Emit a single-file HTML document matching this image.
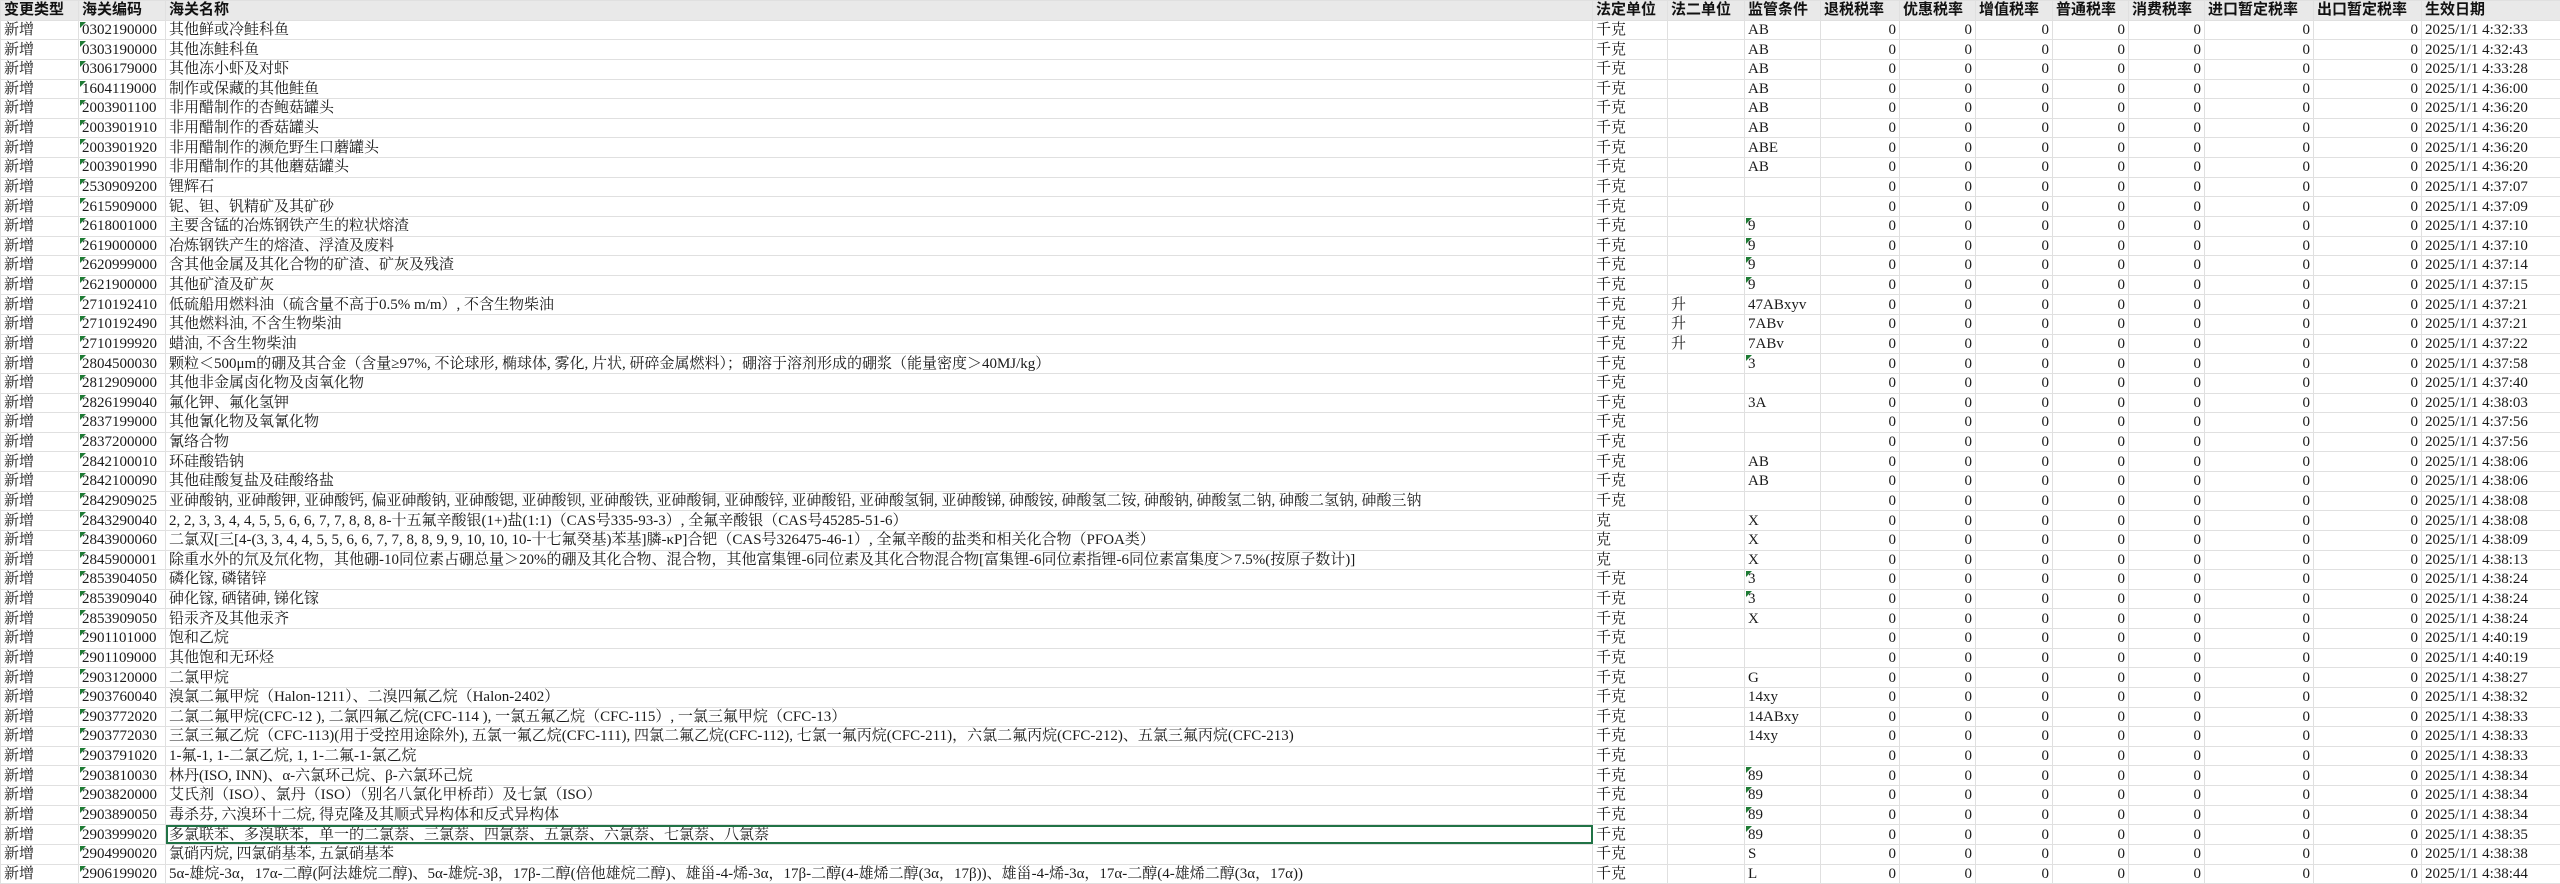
<!DOCTYPE html>
<html><head><meta charset="utf-8">
<style>
html,body{margin:0;padding:0;background:#fff;width:2560px;height:884px;overflow:hidden}
table{border-collapse:collapse;table-layout:fixed;width:2560px;font-family:"Liberation Serif","Noto Serif CJK SC",serif;font-size:15px;color:#1a1a1a}
td,th{height:19.64px;padding:0 3px;border:1px solid #e0e0e0;white-space:pre;overflow:hidden;line-height:18px;box-sizing:border-box}
th{background:#e9e9e9;font-weight:bold;text-align:left;font-family:"Liberation Serif","Noto Sans CJK SC",sans-serif;color:#111}
td.n{text-align:right}
td.c{position:relative}
td.c::before{content:"";position:absolute;left:1px;top:1px;border-top:6px solid #1e7b34;border-right:6px solid transparent}
td.m{position:relative}
td.m::before{content:"";position:absolute;left:1px;top:1px;border-top:6px solid #1e7b34;border-right:6px solid transparent}
td.sel{outline:2px solid #217346;outline-offset:-2px}
</style></head><body>
<table>
<colgroup><col style="width:78px"><col style="width:87px"><col style="width:1427px"><col style="width:75px"><col style="width:77px"><col style="width:76px"><col style="width:79px"><col style="width:76px"><col style="width:77px"><col style="width:76px"><col style="width:76px"><col style="width:109px"><col style="width:108px"><col style="width:139px"></colgroup>
<tr><th>变更类型</th><th>海关编码</th><th>海关名称</th><th>法定单位</th><th>法二单位</th><th>监管条件</th><th>退税税率</th><th>优惠税率</th><th>增值税率</th><th>普通税率</th><th>消费税率</th><th>进口暂定税率</th><th>出口暂定税率</th><th>生效日期</th></tr>
<tr><td>新增</td><td class="c">0302190000</td><td>其他鲜或冷鲑科鱼</td><td>千克</td><td></td><td>AB</td><td class="n">0</td><td class="n">0</td><td class="n">0</td><td class="n">0</td><td class="n">0</td><td class="n">0</td><td class="n">0</td><td>2025/1/1 4:32:33</td></tr>
<tr><td>新增</td><td class="c">0303190000</td><td>其他冻鲑科鱼</td><td>千克</td><td></td><td>AB</td><td class="n">0</td><td class="n">0</td><td class="n">0</td><td class="n">0</td><td class="n">0</td><td class="n">0</td><td class="n">0</td><td>2025/1/1 4:32:43</td></tr>
<tr><td>新增</td><td class="c">0306179000</td><td>其他冻小虾及对虾</td><td>千克</td><td></td><td>AB</td><td class="n">0</td><td class="n">0</td><td class="n">0</td><td class="n">0</td><td class="n">0</td><td class="n">0</td><td class="n">0</td><td>2025/1/1 4:33:28</td></tr>
<tr><td>新增</td><td class="c">1604119000</td><td>制作或保藏的其他鲑鱼</td><td>千克</td><td></td><td>AB</td><td class="n">0</td><td class="n">0</td><td class="n">0</td><td class="n">0</td><td class="n">0</td><td class="n">0</td><td class="n">0</td><td>2025/1/1 4:36:00</td></tr>
<tr><td>新增</td><td class="c">2003901100</td><td>非用醋制作的杏鲍菇罐头</td><td>千克</td><td></td><td>AB</td><td class="n">0</td><td class="n">0</td><td class="n">0</td><td class="n">0</td><td class="n">0</td><td class="n">0</td><td class="n">0</td><td>2025/1/1 4:36:20</td></tr>
<tr><td>新增</td><td class="c">2003901910</td><td>非用醋制作的香菇罐头</td><td>千克</td><td></td><td>AB</td><td class="n">0</td><td class="n">0</td><td class="n">0</td><td class="n">0</td><td class="n">0</td><td class="n">0</td><td class="n">0</td><td>2025/1/1 4:36:20</td></tr>
<tr><td>新增</td><td class="c">2003901920</td><td>非用醋制作的濒危野生口蘑罐头</td><td>千克</td><td></td><td>ABE</td><td class="n">0</td><td class="n">0</td><td class="n">0</td><td class="n">0</td><td class="n">0</td><td class="n">0</td><td class="n">0</td><td>2025/1/1 4:36:20</td></tr>
<tr><td>新增</td><td class="c">2003901990</td><td>非用醋制作的其他蘑菇罐头</td><td>千克</td><td></td><td>AB</td><td class="n">0</td><td class="n">0</td><td class="n">0</td><td class="n">0</td><td class="n">0</td><td class="n">0</td><td class="n">0</td><td>2025/1/1 4:36:20</td></tr>
<tr><td>新增</td><td class="c">2530909200</td><td>锂辉石</td><td>千克</td><td></td><td></td><td class="n">0</td><td class="n">0</td><td class="n">0</td><td class="n">0</td><td class="n">0</td><td class="n">0</td><td class="n">0</td><td>2025/1/1 4:37:07</td></tr>
<tr><td>新增</td><td class="c">2615909000</td><td>铌、钽、钒精矿及其矿砂</td><td>千克</td><td></td><td></td><td class="n">0</td><td class="n">0</td><td class="n">0</td><td class="n">0</td><td class="n">0</td><td class="n">0</td><td class="n">0</td><td>2025/1/1 4:37:09</td></tr>
<tr><td>新增</td><td class="c">2618001000</td><td>主要含锰的冶炼钢铁产生的粒状熔渣</td><td>千克</td><td></td><td class="m">9</td><td class="n">0</td><td class="n">0</td><td class="n">0</td><td class="n">0</td><td class="n">0</td><td class="n">0</td><td class="n">0</td><td>2025/1/1 4:37:10</td></tr>
<tr><td>新增</td><td class="c">2619000000</td><td>冶炼钢铁产生的熔渣、浮渣及废料</td><td>千克</td><td></td><td class="m">9</td><td class="n">0</td><td class="n">0</td><td class="n">0</td><td class="n">0</td><td class="n">0</td><td class="n">0</td><td class="n">0</td><td>2025/1/1 4:37:10</td></tr>
<tr><td>新增</td><td class="c">2620999000</td><td>含其他金属及其化合物的矿渣、矿灰及残渣</td><td>千克</td><td></td><td class="m">9</td><td class="n">0</td><td class="n">0</td><td class="n">0</td><td class="n">0</td><td class="n">0</td><td class="n">0</td><td class="n">0</td><td>2025/1/1 4:37:14</td></tr>
<tr><td>新增</td><td class="c">2621900000</td><td>其他矿渣及矿灰</td><td>千克</td><td></td><td class="m">9</td><td class="n">0</td><td class="n">0</td><td class="n">0</td><td class="n">0</td><td class="n">0</td><td class="n">0</td><td class="n">0</td><td>2025/1/1 4:37:15</td></tr>
<tr><td>新增</td><td class="c">2710192410</td><td>低硫船用燃料油（硫含量不高于0.5% m/m）, 不含生物柴油</td><td>千克</td><td>升</td><td>47ABxyv</td><td class="n">0</td><td class="n">0</td><td class="n">0</td><td class="n">0</td><td class="n">0</td><td class="n">0</td><td class="n">0</td><td>2025/1/1 4:37:21</td></tr>
<tr><td>新增</td><td class="c">2710192490</td><td>其他燃料油, 不含生物柴油</td><td>千克</td><td>升</td><td>7ABv</td><td class="n">0</td><td class="n">0</td><td class="n">0</td><td class="n">0</td><td class="n">0</td><td class="n">0</td><td class="n">0</td><td>2025/1/1 4:37:21</td></tr>
<tr><td>新增</td><td class="c">2710199920</td><td>蜡油, 不含生物柴油</td><td>千克</td><td>升</td><td>7ABv</td><td class="n">0</td><td class="n">0</td><td class="n">0</td><td class="n">0</td><td class="n">0</td><td class="n">0</td><td class="n">0</td><td>2025/1/1 4:37:22</td></tr>
<tr><td>新增</td><td class="c">2804500030</td><td>颗粒＜500μm的硼及其合金（含量≥97%, 不论球形, 椭球体, 雾化, 片状, 研碎金属燃料）；硼溶于溶剂形成的硼浆（能量密度＞40MJ/kg）</td><td>千克</td><td></td><td class="m">3</td><td class="n">0</td><td class="n">0</td><td class="n">0</td><td class="n">0</td><td class="n">0</td><td class="n">0</td><td class="n">0</td><td>2025/1/1 4:37:58</td></tr>
<tr><td>新增</td><td class="c">2812909000</td><td>其他非金属卤化物及卤氧化物</td><td>千克</td><td></td><td></td><td class="n">0</td><td class="n">0</td><td class="n">0</td><td class="n">0</td><td class="n">0</td><td class="n">0</td><td class="n">0</td><td>2025/1/1 4:37:40</td></tr>
<tr><td>新增</td><td class="c">2826199040</td><td>氟化钾、氟化氢钾</td><td>千克</td><td></td><td>3A</td><td class="n">0</td><td class="n">0</td><td class="n">0</td><td class="n">0</td><td class="n">0</td><td class="n">0</td><td class="n">0</td><td>2025/1/1 4:38:03</td></tr>
<tr><td>新增</td><td class="c">2837199000</td><td>其他氰化物及氧氰化物</td><td>千克</td><td></td><td></td><td class="n">0</td><td class="n">0</td><td class="n">0</td><td class="n">0</td><td class="n">0</td><td class="n">0</td><td class="n">0</td><td>2025/1/1 4:37:56</td></tr>
<tr><td>新增</td><td class="c">2837200000</td><td>氰络合物</td><td>千克</td><td></td><td></td><td class="n">0</td><td class="n">0</td><td class="n">0</td><td class="n">0</td><td class="n">0</td><td class="n">0</td><td class="n">0</td><td>2025/1/1 4:37:56</td></tr>
<tr><td>新增</td><td class="c">2842100010</td><td>环硅酸锆钠</td><td>千克</td><td></td><td>AB</td><td class="n">0</td><td class="n">0</td><td class="n">0</td><td class="n">0</td><td class="n">0</td><td class="n">0</td><td class="n">0</td><td>2025/1/1 4:38:06</td></tr>
<tr><td>新增</td><td class="c">2842100090</td><td>其他硅酸复盐及硅酸络盐</td><td>千克</td><td></td><td>AB</td><td class="n">0</td><td class="n">0</td><td class="n">0</td><td class="n">0</td><td class="n">0</td><td class="n">0</td><td class="n">0</td><td>2025/1/1 4:38:06</td></tr>
<tr><td>新增</td><td class="c">2842909025</td><td>亚砷酸钠, 亚砷酸钾, 亚砷酸钙, 偏亚砷酸钠, 亚砷酸锶, 亚砷酸钡, 亚砷酸铁, 亚砷酸铜, 亚砷酸锌, 亚砷酸铅, 亚砷酸氢铜, 亚砷酸锑, 砷酸铵, 砷酸氢二铵, 砷酸钠, 砷酸氢二钠, 砷酸二氢钠, 砷酸三钠</td><td>千克</td><td></td><td></td><td class="n">0</td><td class="n">0</td><td class="n">0</td><td class="n">0</td><td class="n">0</td><td class="n">0</td><td class="n">0</td><td>2025/1/1 4:38:08</td></tr>
<tr><td>新增</td><td class="c">2843290040</td><td>2, 2, 3, 3, 4, 4, 5, 5, 6, 6, 7, 7, 8, 8, 8-十五氟辛酸银(1+)盐(1:1)（CAS号335-93-3）, 全氟辛酸银（CAS号45285-51-6）</td><td>克</td><td></td><td>X</td><td class="n">0</td><td class="n">0</td><td class="n">0</td><td class="n">0</td><td class="n">0</td><td class="n">0</td><td class="n">0</td><td>2025/1/1 4:38:08</td></tr>
<tr><td>新增</td><td class="c">2843900060</td><td>二氯双[三[4-(3, 3, 4, 4, 5, 5, 6, 6, 7, 7, 8, 8, 9, 9, 10, 10, 10-十七氟癸基)苯基]膦-κP]合钯（CAS号326475-46-1）, 全氟辛酸的盐类和相关化合物（PFOA类）</td><td>克</td><td></td><td>X</td><td class="n">0</td><td class="n">0</td><td class="n">0</td><td class="n">0</td><td class="n">0</td><td class="n">0</td><td class="n">0</td><td>2025/1/1 4:38:09</td></tr>
<tr><td>新增</td><td class="c">2845900001</td><td>除重水外的氘及氘化物，其他硼-10同位素占硼总量＞20%的硼及其化合物、混合物，其他富集锂-6同位素及其化合物混合物[富集锂-6同位素指锂-6同位素富集度＞7.5%(按原子数计)]</td><td>克</td><td></td><td>X</td><td class="n">0</td><td class="n">0</td><td class="n">0</td><td class="n">0</td><td class="n">0</td><td class="n">0</td><td class="n">0</td><td>2025/1/1 4:38:13</td></tr>
<tr><td>新增</td><td class="c">2853904050</td><td>磷化镓, 磷锗锌</td><td>千克</td><td></td><td class="m">3</td><td class="n">0</td><td class="n">0</td><td class="n">0</td><td class="n">0</td><td class="n">0</td><td class="n">0</td><td class="n">0</td><td>2025/1/1 4:38:24</td></tr>
<tr><td>新增</td><td class="c">2853909040</td><td>砷化镓, 硒锗砷, 锑化镓</td><td>千克</td><td></td><td class="m">3</td><td class="n">0</td><td class="n">0</td><td class="n">0</td><td class="n">0</td><td class="n">0</td><td class="n">0</td><td class="n">0</td><td>2025/1/1 4:38:24</td></tr>
<tr><td>新增</td><td class="c">2853909050</td><td>铅汞齐及其他汞齐</td><td>千克</td><td></td><td>X</td><td class="n">0</td><td class="n">0</td><td class="n">0</td><td class="n">0</td><td class="n">0</td><td class="n">0</td><td class="n">0</td><td>2025/1/1 4:38:24</td></tr>
<tr><td>新增</td><td class="c">2901101000</td><td>饱和乙烷</td><td>千克</td><td></td><td></td><td class="n">0</td><td class="n">0</td><td class="n">0</td><td class="n">0</td><td class="n">0</td><td class="n">0</td><td class="n">0</td><td>2025/1/1 4:40:19</td></tr>
<tr><td>新增</td><td class="c">2901109000</td><td>其他饱和无环烃</td><td>千克</td><td></td><td></td><td class="n">0</td><td class="n">0</td><td class="n">0</td><td class="n">0</td><td class="n">0</td><td class="n">0</td><td class="n">0</td><td>2025/1/1 4:40:19</td></tr>
<tr><td>新增</td><td class="c">2903120000</td><td>二氯甲烷</td><td>千克</td><td></td><td>G</td><td class="n">0</td><td class="n">0</td><td class="n">0</td><td class="n">0</td><td class="n">0</td><td class="n">0</td><td class="n">0</td><td>2025/1/1 4:38:27</td></tr>
<tr><td>新增</td><td class="c">2903760040</td><td>溴氯二氟甲烷（Halon-1211）、二溴四氟乙烷（Halon-2402）</td><td>千克</td><td></td><td>14xy</td><td class="n">0</td><td class="n">0</td><td class="n">0</td><td class="n">0</td><td class="n">0</td><td class="n">0</td><td class="n">0</td><td>2025/1/1 4:38:32</td></tr>
<tr><td>新增</td><td class="c">2903772020</td><td>二氯二氟甲烷(CFC-12 ), 二氯四氟乙烷(CFC-114 ), 一氯五氟乙烷（CFC-115）, 一氯三氟甲烷（CFC-13）</td><td>千克</td><td></td><td>14ABxy</td><td class="n">0</td><td class="n">0</td><td class="n">0</td><td class="n">0</td><td class="n">0</td><td class="n">0</td><td class="n">0</td><td>2025/1/1 4:38:33</td></tr>
<tr><td>新增</td><td class="c">2903772030</td><td>三氯三氟乙烷（CFC-113)(用于受控用途除外), 五氯一氟乙烷(CFC-111), 四氯二氟乙烷(CFC-112), 七氯一氟丙烷(CFC-211)，六氯二氟丙烷(CFC-212)、五氯三氟丙烷(CFC-213)</td><td>千克</td><td></td><td>14xy</td><td class="n">0</td><td class="n">0</td><td class="n">0</td><td class="n">0</td><td class="n">0</td><td class="n">0</td><td class="n">0</td><td>2025/1/1 4:38:33</td></tr>
<tr><td>新增</td><td class="c">2903791020</td><td>1-氟-1, 1-二氯乙烷, 1, 1-二氟-1-氯乙烷</td><td>千克</td><td></td><td></td><td class="n">0</td><td class="n">0</td><td class="n">0</td><td class="n">0</td><td class="n">0</td><td class="n">0</td><td class="n">0</td><td>2025/1/1 4:38:33</td></tr>
<tr><td>新增</td><td class="c">2903810030</td><td>林丹(ISO, INN)、α-六氯环己烷、β-六氯环己烷</td><td>千克</td><td></td><td class="m">89</td><td class="n">0</td><td class="n">0</td><td class="n">0</td><td class="n">0</td><td class="n">0</td><td class="n">0</td><td class="n">0</td><td>2025/1/1 4:38:34</td></tr>
<tr><td>新增</td><td class="c">2903820000</td><td>艾氏剂（ISO）、氯丹（ISO）（别名八氯化甲桥茚）及七氯（ISO）</td><td>千克</td><td></td><td class="m">89</td><td class="n">0</td><td class="n">0</td><td class="n">0</td><td class="n">0</td><td class="n">0</td><td class="n">0</td><td class="n">0</td><td>2025/1/1 4:38:34</td></tr>
<tr><td>新增</td><td class="c">2903890050</td><td>毒杀芬, 六溴环十二烷, 得克隆及其顺式异构体和反式异构体</td><td>千克</td><td></td><td class="m">89</td><td class="n">0</td><td class="n">0</td><td class="n">0</td><td class="n">0</td><td class="n">0</td><td class="n">0</td><td class="n">0</td><td>2025/1/1 4:38:34</td></tr>
<tr><td>新增</td><td class="c">2903999020</td><td class="sel">多氯联苯、多溴联苯，单一的二氯萘、三氯萘、四氯萘、五氯萘、六氯萘、七氯萘、八氯萘</td><td>千克</td><td></td><td class="m">89</td><td class="n">0</td><td class="n">0</td><td class="n">0</td><td class="n">0</td><td class="n">0</td><td class="n">0</td><td class="n">0</td><td>2025/1/1 4:38:35</td></tr>
<tr><td>新增</td><td class="c">2904990020</td><td>氯硝丙烷, 四氯硝基苯, 五氯硝基苯</td><td>千克</td><td></td><td>S</td><td class="n">0</td><td class="n">0</td><td class="n">0</td><td class="n">0</td><td class="n">0</td><td class="n">0</td><td class="n">0</td><td>2025/1/1 4:38:38</td></tr>
<tr><td>新增</td><td class="c">2906199020</td><td>5α-雄烷-3α，17α-二醇(阿法雄烷二醇)、5α-雄烷-3β，17β-二醇(倍他雄烷二醇)、雄甾-4-烯-3α，17β-二醇(4-雄烯二醇(3α，17β))、雄甾-4-烯-3α，17α-二醇(4-雄烯二醇(3α，17α))</td><td>千克</td><td></td><td>L</td><td class="n">0</td><td class="n">0</td><td class="n">0</td><td class="n">0</td><td class="n">0</td><td class="n">0</td><td class="n">0</td><td>2025/1/1 4:38:44</td></tr>
</table>
</body></html>
